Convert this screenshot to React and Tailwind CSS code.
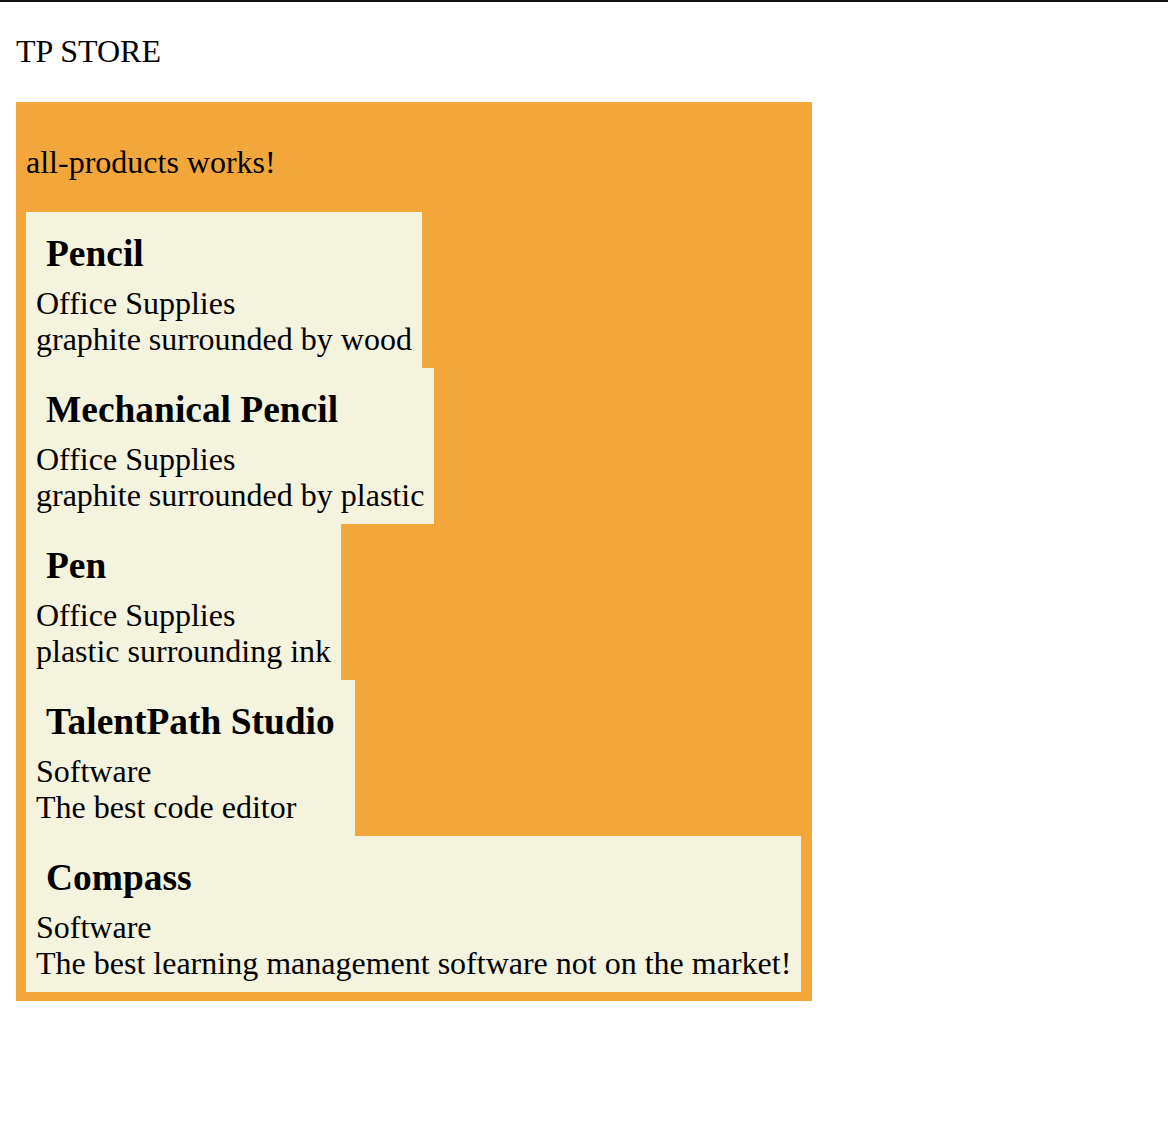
import React from 'react';

const products = [
    { name: 'Pencil', category: 'Office Supplies', description: 'graphite surrounded by wood' },
    { name: 'Mechanical Pencil', category: 'Office Supplies', description: 'graphite surrounded by plastic' },
    { name: 'Pen', category: 'Office Supplies', description: 'plastic surrounding ink' },
    { name: 'TalentPath Studio', category: 'Software', description: 'The best code editor' },
    { name: 'Compass', category: 'Software', description: 'The best learning management software not on the market!' },
];

function ProductCard({ product }) {
    return (
        <div className="w-fit bg-[#f4f3de] p-[10px]">
            <h3 className="m-[10px] text-[37.44px] font-bold leading-[43px]">{product.name}</h3>
            <div className="text-[32px] leading-[36.5px]">{product.category}</div>
            <div className="text-[32px] leading-[36.5px]">{product.description}</div>
        </div>
    );
}

export default function App() {
    return (
        <div className="min-h-[1144px] border-t-2 border-[#111111] bg-white font-['Liberation_Serif',serif] text-black">
            <div className="px-4 pt-[31px]">
                {/* Header */}
                <div className="text-[32px] leading-[36.8px]">TP STORE</div>

                {/* All products */}
                <div className="mt-[32px] inline-block bg-[#f3a73b] p-[10px] pr-[11px] pb-[9px]">
                    <p className="my-[32px] text-[32px] leading-[36px]">all-products works!</p>
                    {products.map(product => (
                        <ProductCard key={product.name} product={product} />
                    ))}
                </div>
            </div>
        </div>
    );
}
